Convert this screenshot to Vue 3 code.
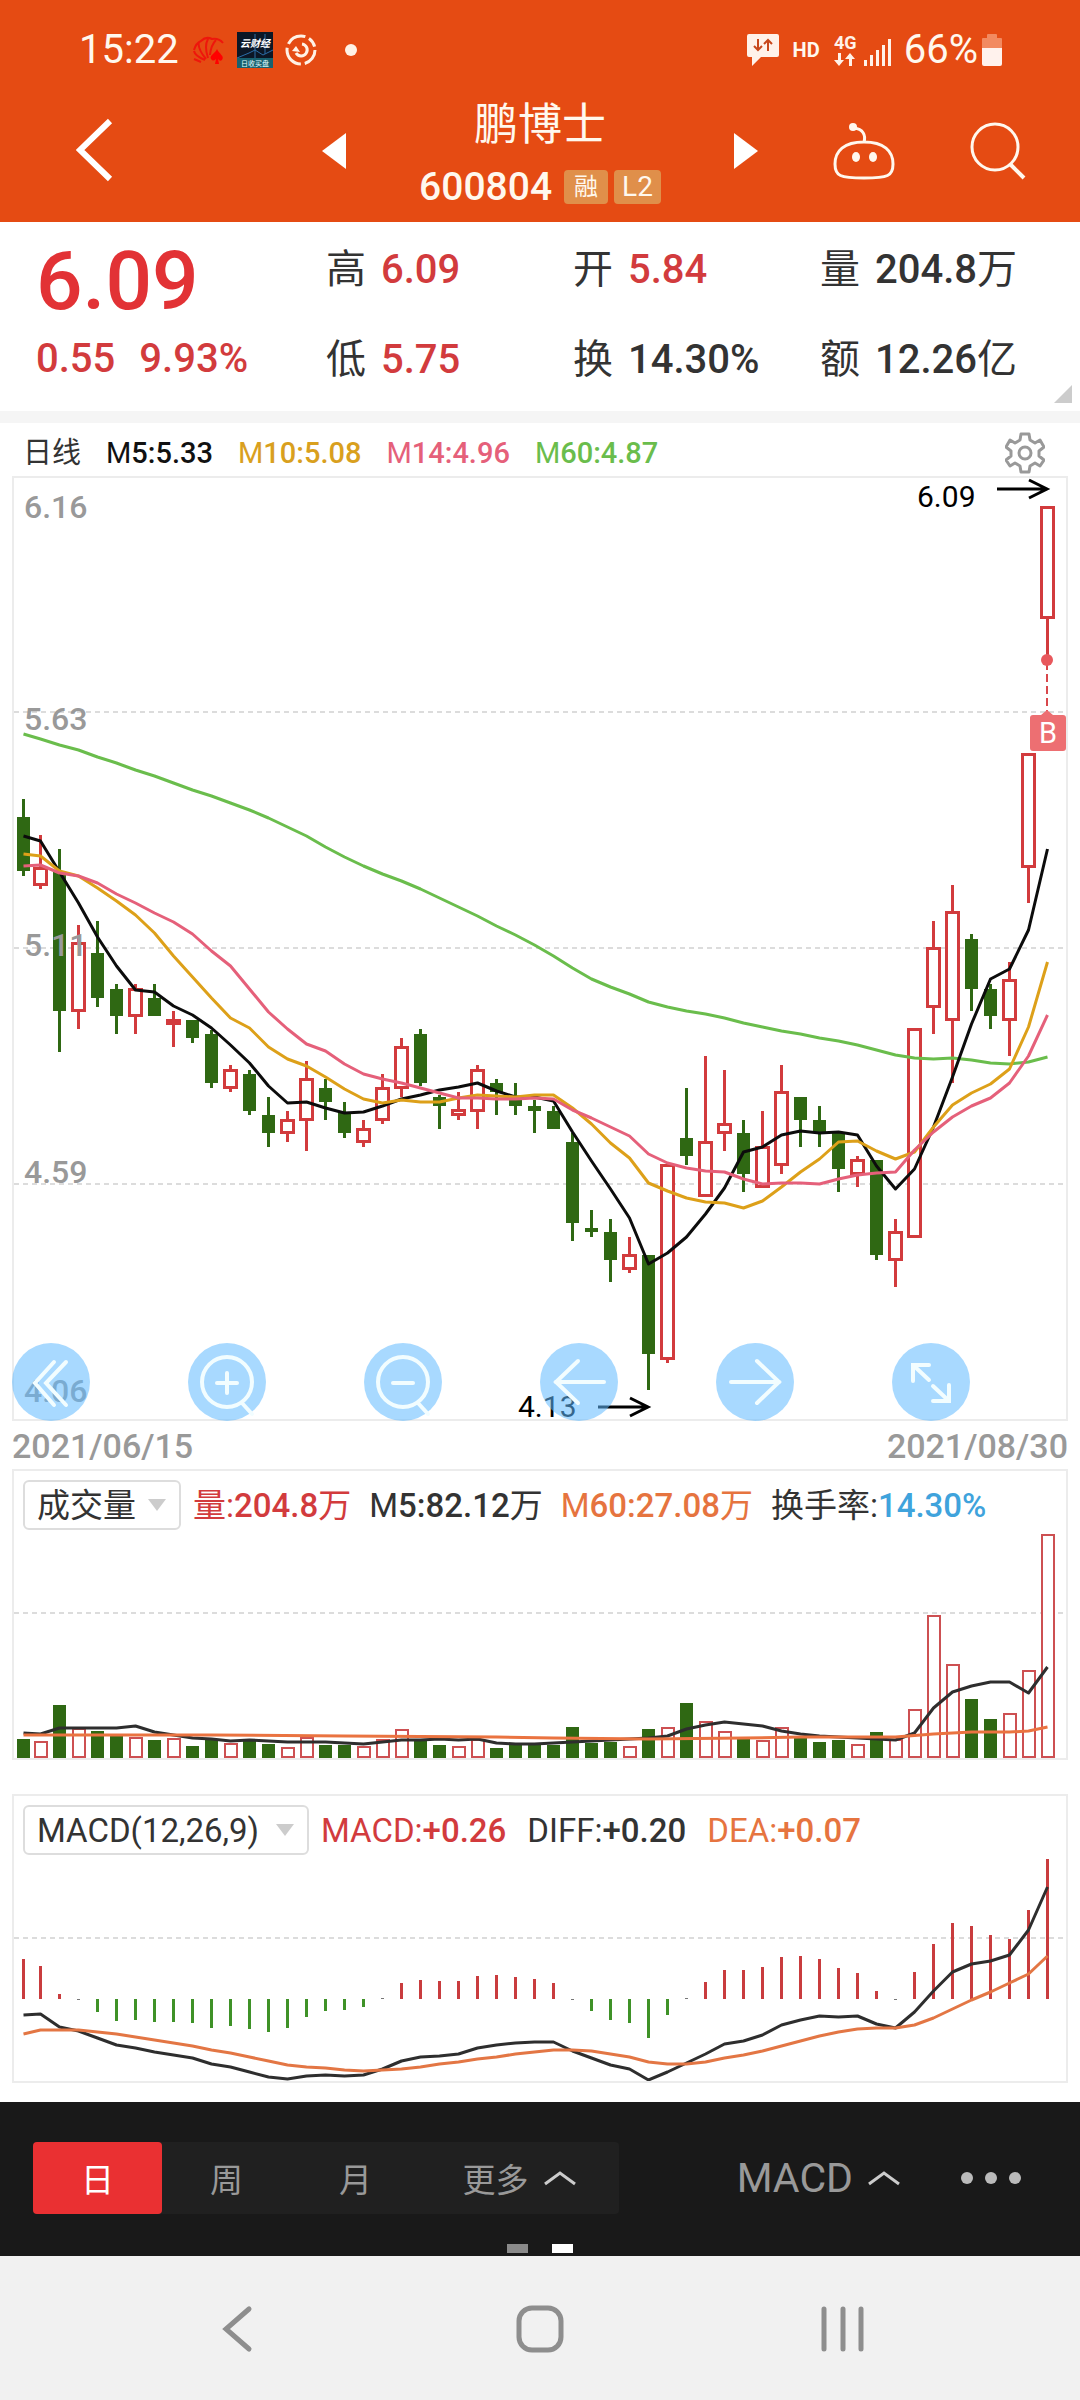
<script setup>
import { ref } from 'vue'

const range = ref('日')
const indicator = ref('volume')
const study = ref('macd')

const quotes = [
  { label: '高', value: '6.09', unit: '', up: true },
  { label: '开', value: '5.84', unit: '', up: true },
  { label: '量', value: '204.8', unit: '万', up: false },
  { label: '低', value: '5.75', unit: '', up: true },
  { label: '换', value: '14.30%', unit: '', up: false },
  { label: '额', value: '12.26', unit: '亿', up: false },
]

const averages = [
  { name: 'M', value: '5:5.33', tone: 'black' },
  { name: 'M', value: '10:5.08', tone: 'gold' },
  { name: 'M', value: '14:4.96', tone: 'pink' },
  { name: 'M', value: '60:4.87', tone: 'green' },
]

const volumeLegend = [
  { name: '量:', value: '204.8', unit: '万', tone: 'red' },
  { name: 'M', value: '5:82.12', unit: '万', tone: 'dark' },
  { name: 'M', value: '60:27.08', unit: '万', tone: 'orange' },
]

const macdLegend = [
  { name: 'MACD:', value: '+0.26', tone: 'red' },
  { name: 'DIFF:', value: '+0.20', tone: 'dark' },
  { name: 'DEA:', value: '+0.07', tone: 'orange' },
]

// Centre of each trading day on the shared time axis.
const dayX = (i) => (i < 2 ? 23.5 + i * 17 : 59.5 + (i - 2) * 19)
const linePoints = (ys) => ys.map((y, i) => `${dayX(i)},${y}`).join(' ')
const sparsePoints = (pairs) => pairs.map(([i, y]) => `${dayX(i)},${y}`).join(' ')

// [rising, high, body top, body bottom, low]
const candles = [
  [0, 799, 817, 871, 876], [1, 835, 867, 886, 889], [0, 849, 872, 1011, 1052], [1, 925, 942, 1012, 1029],
  [0, 921, 953, 998, 1007], [0, 984, 989, 1016, 1034], [1, 984, 988, 1017, 1034], [0, 984, 998, 1016, 1016],
  [1, 1011, 1019, 1025, 1047], [0, 1020, 1020, 1038, 1043], [0, 1030, 1034, 1083, 1088], [1, 1065, 1069, 1089, 1092],
  [0, 1070, 1074, 1111, 1115], [0, 1097, 1115, 1133, 1147], [1, 1111, 1119, 1134, 1142], [1, 1061, 1078, 1121, 1151],
  [0, 1079, 1088, 1102, 1120], [0, 1102, 1113, 1133, 1138], [1, 1120, 1128, 1143, 1147], [1, 1074, 1087, 1121, 1124],
  [1, 1038, 1046, 1089, 1097], [0, 1029, 1034, 1083, 1086], [0, 1095, 1097, 1106, 1129], [1, 1092, 1109, 1116, 1120],
  [1, 1065, 1069, 1112, 1129], [0, 1079, 1083, 1092, 1115], [0, 1083, 1097, 1106, 1115], [0, 1100, 1106, 1111, 1133],
  [0, 1106, 1111, 1129, 1129], [0, 1133, 1142, 1223, 1241], [0, 1210, 1228, 1232, 1237], [0, 1219, 1232, 1260, 1282],
  [1, 1237, 1254, 1270, 1273], [0, 1255, 1255, 1354, 1390], [1, 1164, 1164, 1360, 1363], [0, 1088, 1138, 1156, 1165],
  [1, 1056, 1141, 1197, 1197], [1, 1070, 1123, 1134, 1151], [0, 1120, 1133, 1174, 1192], [1, 1111, 1146, 1188, 1188],
  [1, 1065, 1091, 1166, 1174], [0, 1097, 1097, 1120, 1147], [0, 1106, 1120, 1133, 1147], [0, 1133, 1133, 1169, 1192],
  [1, 1156, 1159, 1175, 1187], [0, 1160, 1160, 1255, 1260], [1, 1219, 1231, 1261, 1287], [1, 1028, 1028, 1238, 1238],
  [1, 921, 947, 1008, 1034], [1, 885, 911, 1021, 1083], [0, 934, 939, 989, 1011], [0, 984, 989, 1016, 1029],
  [1, 962, 979, 1021, 1056], [1, 753, 753, 868, 903], [1, 506, 506, 619, 658],
].map(([up, high, top, bottom, low], i) => ({ x: dayX(i), up, high, top, bottom, low }))

const ma5 = linePoints([
  836, 841, 872, 903, 937, 966, 990, 992, 1006, 1015, 1028, 1045, 1063, 1086, 1103, 1102, 1108, 1113, 1112, 1106,
  1099, 1095, 1090, 1087, 1083, 1091, 1097, 1097, 1101, 1132, 1161, 1189, 1218, 1264, 1253, 1237, 1214, 1188, 1152,
  1147, 1135, 1131, 1133, 1132, 1135, 1166, 1189, 1169, 1127, 1077, 1024, 979, 969, 930, 849,
])
const ma10 = linePoints([
  854, 856, 871, 876, 888, 901, 915, 933, 956, 977, 998, 1018, 1028, 1047, 1059, 1066, 1077, 1089, 1099, 1103,
  1100, 1102, 1102, 1098, 1095, 1096, 1097, 1095, 1095, 1108, 1124, 1143, 1158, 1183, 1191, 1198, 1202, 1203, 1208,
  1201, 1187, 1172, 1159, 1142, 1141, 1151, 1159, 1152, 1127, 1105, 1093, 1084, 1069, 1027, 962,
])
const ma14 = linePoints([
  866, 865, 873, 876, 883, 894, 903, 913, 922, 934, 951, 966, 989, 1012, 1029, 1044, 1051, 1064, 1074, 1079,
  1083, 1088, 1093, 1098, 1098, 1099, 1099, 1098, 1099, 1110, 1118, 1127, 1136, 1154, 1163, 1168, 1171, 1172, 1179,
  1184, 1183, 1183, 1184, 1179, 1175, 1173, 1172, 1150, 1132, 1117, 1106, 1098, 1083, 1056, 1015,
])
const ma60 = linePoints([
  734, 739, 745, 750, 757, 763, 770, 776, 783, 790, 796, 803, 810, 818, 827, 836, 847, 857, 866, 874,
  881, 889, 898, 907, 916, 926, 935, 945, 956, 968, 979, 987, 994, 1002, 1007, 1011, 1014, 1018, 1023,
  1027, 1031, 1034, 1038, 1041, 1045, 1050, 1055, 1058, 1059, 1058, 1060, 1063, 1064, 1062, 1057,
])

const volumeBase = 1758
const volumes = [
  1739, 1741, 1705, 1728, 1731, 1736, 1737, 1740, 1738, 1746, 1740, 1743, 1740, 1744, 1747, 1737, 1745, 1745, 1746,
  1739, 1729, 1740, 1745, 1746, 1739, 1748, 1744, 1744, 1745, 1727, 1743, 1742, 1746, 1729, 1727, 1703, 1721, 1731,
  1739, 1740, 1727, 1738, 1742, 1740, 1744, 1732, 1739, 1709, 1615, 1664, 1699, 1719, 1713, 1670, 1534,
].map((top, i) => ({ x: dayX(i), up: candles[i].up, top }))

const volume5 = linePoints([
  1733, 1734, 1728, 1728, 1728, 1728, 1726, 1732, 1735, 1738, 1739, 1741, 1740, 1741, 1742, 1742, 1742, 1743, 1744,
  1742, 1740, 1740, 1739, 1740, 1739, 1743, 1744, 1744, 1743, 1742, 1741, 1740, 1739, 1738, 1736, 1729, 1725, 1722,
  1724, 1726, 1731, 1734, 1736, 1737, 1738, 1739, 1740, 1733, 1708, 1692, 1686, 1682, 1682, 1693, 1667,
])
const volume60 = sparsePoints([
  [0, 1735], [10, 1735], [17, 1736], [25, 1737], [28, 1738], [33, 1739], [38, 1738], [41, 1737], [46, 1737],
  [48, 1734], [50, 1732], [52, 1732], [53, 1731], [54, 1727],
])

const macdZero = 1999
const macdBars = [
  1959, 1966, 1994, 2000, 2012, 2021, 2020, 2022, 2022, 2023, 2028, 2026, 2029, 2032, 2028, 2017, 2011, 2010, 2007,
  1998, 1983, 1980, 1981, 1981, 1976, 1975, 1977, 1979, 1983, 2000, 2011, 2020, 2023, 2038, 2015, 1998, 1982, 1970,
  1970, 1967, 1957, 1956, 1959, 1968, 1973, 1991, 2000, 1972, 1944, 1923, 1926, 1935, 1939, 1910, 1859,
].map((y, i) => ({
  x: dayX(i),
  y: Math.min(y, macdZero),
  height: Math.abs(y - macdZero),
  tone: Math.abs(y - macdZero) < 2 ? '#777' : y < macdZero ? '#c93c3e' : '#3f9228',
}))
const diff = linePoints([
  2015, 2014, 2027, 2031, 2038, 2045, 2048, 2052, 2055, 2058, 2064, 2067, 2072, 2077, 2079, 2076, 2075, 2076, 2075,
  2069, 2061, 2057, 2056, 2054, 2048, 2045, 2043, 2042, 2042, 2051, 2058, 2065, 2069, 2080, 2072, 2063, 2054, 2044,
  2041, 2035, 2025, 2020, 2016, 2017, 2016, 2024, 2028, 2012, 1991, 1972, 1964, 1961, 1955, 1930, 1887,
])
const dea = linePoints([
  2034, 2030, 2030, 2030, 2032, 2034, 2037, 2040, 2043, 2046, 2050, 2053, 2057, 2061, 2065, 2067, 2068, 2070, 2071,
  2070, 2069, 2067, 2064, 2062, 2059, 2057, 2054, 2052, 2050, 2050, 2051, 2054, 2057, 2062, 2064, 2064, 2062, 2058,
  2055, 2051, 2046, 2041, 2036, 2032, 2029, 2028, 2028, 2025, 2018, 2009, 2000, 1992, 1983, 1974, 1956,
])

const priceLabels = [
  { text: '6.16', y: 518 },
  { text: '5.63', y: 730 },
  { text: '5.11', y: 956 },
  { text: '4.59', y: 1183 },
  { text: '4.06', y: 1402 },
]

const tools = [
  { label: '更早', paths: ['M42 19 23 40 42 62', 'M54 19 34 40 54 62'] },
  { label: '放大', paths: ['M39 30V50', 'M29 40H49', 'M54 60 64 71'], lens: true },
  { label: '缩小', paths: ['M29 40H49', 'M54 60 64 71'], lens: true },
  { label: '左移', paths: ['M64 39H16', 'M38 18 16 39 38 60'] },
  { label: '右移', paths: ['M15 39H63', 'M41 18 63 39 41 60'] },
  { label: '全屏', paths: ['M21 38V22H37', 'M21 22 37 37', 'M41 58H57V42', 'M57 58 41 43'] },
]
</script>

<template>
  <div class="app">
    <header class="header">
      <div class="status">
        <div class="status-side">
          <span class="clock">15:22</span>
          <svg class="shell" width="34" height="28" viewBox="0 0 34 28" fill="none" stroke="#ee160c" stroke-width="2">
            <path d="M14 24Q4 20 3 15M10 26 3 23M15 23Q6 12 8 6M17 22Q13 10 17 3M19 19Q20 9 25 4M3 14Q5 7 10 5Q15 0 21 3Q28 2 32 7" />
            <path d="M26 13C28 18 34 20 31 24Q29 26 27 23L28 28H24L25 23Q22 26 20 23C18 19 24 18 26 13Z" fill="#f00" stroke="none" />
          </svg>
          <svg width="36" height="36" viewBox="0 0 36 36">
            <rect width="36" height="36" fill="#0c1726" />
            <path d="M0 26 12 21 18 18 26 23 36 18M18 2V26M28 2V22" stroke="#2b6ea8" stroke-width="1" fill="none" />
            <rect y="26" width="36" height="10" fill="#17616f" />
            <text x="18" y="15" text-anchor="middle" font-size="10" font-weight="700" font-style="italic" fill="#fff">云财经</text>
            <text x="18" y="34" text-anchor="middle" font-size="7" fill="#e6ffff">日收买盘</text>
          </svg>
          <svg width="32" height="32" viewBox="0 0 32 32" fill="none" stroke="#fff2e6" stroke-width="3">
            <circle cx="16" cy="16" r="14" stroke-dasharray="18 4 24 4 20 4 10 4" />
            <path d="M17 10A6 6 0 1 1 11 19" />
            <path d="M7 17 11 12 15 18Z" fill="#fff2e6" stroke="none" />
          </svg>
          <i class="dot"></i>
        </div>
        <div class="status-side right">
          <svg width="32" height="34" viewBox="0 0 32 34">
            <path d="M2 1H30Q32 1 32 3V22Q32 24 30 24H14L5 33V24H2Q0 24 0 22V3Q0 1 2 1Z" fill="#fff2e9" />
            <path d="M11 6V17M7 13 11 17 15 13M21 18V7M17 11 21 7 25 11" fill="none" stroke="#c8471a" stroke-width="2" />
          </svg>
          <span class="hd">HD</span>
          <svg width="58" height="34" viewBox="0 0 58 34" fill="#fff2e9">
            <text x="0" y="16" font-size="18" font-weight="700">4G</text>
            <path d="M4 20H7V27H10L5 33 0 27H4ZM15 33H18V26H21L16 20 11 26H15Z" />
            <path d="M30 27H33V33H30ZM36 22H39V33H36ZM42 17H45V33H42ZM48 12H51V33H48ZM54 6H57V33H54Z" />
          </svg>
          <span class="battery-text">66%</span>
          <svg class="battery" width="20" height="32" viewBox="0 0 20 32">
            <path d="M5 1Q5 0 6 0H14Q15 0 15 1V4H19Q20 4 20 5V14H0V5Q0 4 1 4H5Z" fill="#f28a60" />
            <path d="M0 14H20V30Q20 32 18 32H2Q0 32 0 30Z" fill="#fff2ed" />
          </svg>
        </div>
      </div>
      <nav class="titlebar">
        <div class="side">
          <button class="plain" aria-label="返回">
            <svg width="38" height="66" viewBox="0 0 38 66"><path d="M34 3 4 32 34 61" fill="none" stroke="#fff" stroke-width="6" /></svg>
          </button>
          <button class="plain" aria-label="上一只">
            <svg width="24" height="36" viewBox="0 0 24 36"><path d="M24 0V36L0 18Z" fill="#fff" /></svg>
          </button>
        </div>
        <div class="stock">
          <h1>鹏博士</h1>
          <div class="code">
            <strong>600804</strong>
            <span class="badge">融</span>
            <span class="badge level">L2</span>
          </div>
        </div>
        <div class="side end">
          <button class="plain" aria-label="下一只">
            <svg width="24" height="36" viewBox="0 0 24 36"><path d="M0 0V36L24 18Z" fill="#fff" /></svg>
          </button>
          <button class="plain" aria-label="助手">
            <svg width="62" height="58" viewBox="0 0 62 58" fill="none" stroke="#fff8ee" stroke-width="3">
              <path d="M31 20C51 20 60 29 60 42C60 54 55 56 31 56C7 56 2 54 2 42C2 29 11 20 31 20ZM21 6C30 7 33 13 31 20" />
              <circle cx="20" cy="5" r="4" fill="#fff8ee" stroke="none" />
              <ellipse cx="23" cy="35" rx="4" ry="5" fill="#fff8ee" stroke="none" />
              <ellipse cx="40" cy="35" rx="4" ry="5" fill="#fff8ee" stroke="none" />
            </svg>
          </button>
          <button class="plain" aria-label="搜索">
            <svg width="56" height="58" viewBox="0 0 56 58" fill="none" stroke="#fff8ee" stroke-width="3">
              <circle cx="25" cy="25" r="23" /><path d="M40 42 54 56" stroke-width="4" />
            </svg>
          </button>
        </div>
      </nav>
    </header>

    <section class="quote">
      <div class="price">
        <strong class="last">6.09</strong>
        <div class="change"><span>0.55</span><span>9.93%</span></div>
      </div>
      <dl class="stats">
        <div v-for="q in quotes" :key="q.label" class="stat">
          <dt>{{ q.label }}</dt>
          <dd :class="{ up: q.up }">{{ q.value }}<span class="unit">{{ q.unit }}</span></dd>
        </div>
      </dl>
      <i class="corner"></i>
    </section>

    <main class="charts">
      <div class="ma-row">
        <span class="period">日线</span>
        <span v-for="a in averages" :key="a.value" :class="a.tone">{{ a.name }}<b>{{ a.value }}</b></span>
        <button class="plain settings" aria-label="设置">
          <svg width="40" height="42" viewBox="0 0 40 42" fill="none" stroke="#999" stroke-width="3" stroke-linejoin="round">
            <path d="M16 2H24L25 8 30 11 35 8 39 15 34 19V24L39 28 35 34 30 31 25 34 24 40H16L15 34 10 31 5 34 1 28 6 24V19L1 15 5 8 10 11 15 8Z" />
            <circle cx="20" cy="21" r="6" />
          </svg>
        </button>
      </div>

      <div class="kline">
        <div class="frame">
          <svg class="plot" viewBox="14 478 1052 941">
            <g class="grid"><path d="M14 712H1066M14 948H1066M14 1184H1066" /></g>
            <g v-for="c in candles" :key="c.x">
              <template v-if="c.up">
                <rect :x="c.x - 1.5" :y="c.high" width="3" :height="c.top - c.high" fill="#d23b3d" />
                <rect :x="c.x - 1.5" :y="c.bottom" width="3" :height="c.low - c.bottom" fill="#d23b3d" />
                <rect :x="c.x - 6" :y="c.top + 1.5" width="12" :height="c.bottom - c.top - 3" fill="#fff" stroke="#d23b3d" stroke-width="3" />
              </template>
              <template v-else>
                <rect :x="c.x - 1.5" :y="c.high" width="3" :height="c.low - c.high" fill="#2f6813" />
                <rect :x="c.x - 6.5" :y="c.top" width="13" :height="c.bottom - c.top" fill="#2f6813" />
              </template>
            </g>
            <g class="line">
              <polyline :points="ma60" stroke="#6abd4c" />
              <polyline :points="ma5" stroke="#0c0c0c" />
              <polyline :points="ma10" stroke="#dda019" />
              <polyline :points="ma14" stroke="#e5607a" />
            </g>
            <g class="axis"><text v-for="p in priceLabels" :key="p.text" x="24" :y="p.y">{{ p.text }}</text></g>
            <g font-size="30" fill="#000">
              <text x="917" y="507">6.09</text>
              <text x="518" y="1417">4.13</text>
            </g>
            <path d="M997 489H1046M1029 480 1047 489 1029 498M598 1407H647M630 1398 648 1407 630 1416" fill="none" stroke="#000" stroke-width="3" />
            <path d="M1047 662V712" stroke="#d8474b" stroke-width="2" stroke-dasharray="8 4" />
            <circle cx="1047" cy="660" r="6" fill="#e8585c" />
            <path d="M1047 710 1053 715H1063Q1066 715 1066 718V748Q1066 751 1063 751H1033Q1030 751 1030 748V718Q1030 715 1033 715H1041Z" fill="#ed6f72" />
            <text x="1048" y="743" font-size="29" fill="#fff" text-anchor="middle">B</text>
          </svg>
        </div>
        <div class="tools">
          <button v-for="t in tools" :key="t.label" class="tool" :aria-label="t.label">
            <svg width="78" height="78" viewBox="0 0 78 78" fill="none" stroke="#f2fdff" stroke-width="4" stroke-linecap="round">
              <circle v-if="t.lens" cx="39" cy="39" r="25" stroke-width="4" />
              <path v-for="d in t.paths" :key="d" :d="d" />
            </svg>
          </button>
        </div>
      </div>
      <div class="dates"><time>2021/06/15</time><time>2021/08/30</time></div>

      <section class="frame volume">
        <div class="legend">
          <label class="picker">
            <select v-model="indicator" aria-label="副图指标"><option value="volume">成交量</option></select>
          </label>
          <span v-for="l in volumeLegend" :key="l.value" :class="l.tone">{{ l.name }}<b>{{ l.value }}</b>{{ l.unit }}</span>
          <span class="dark">换手率:<b class="blue">14.30%</b></span>
        </div>
        <svg class="plot" viewBox="14 1532 1052 226">
          <g class="grid"><path d="M14 1613H1066" /></g>
          <g v-for="v in volumes" :key="v.x">
            <rect v-if="v.up" :x="v.x - 5.5" :y="v.top + 1" width="12" :height="volumeBase - v.top - 2" fill="#fff" stroke="#cd5052" stroke-width="2" />
            <rect v-else :x="v.x - 6.5" :y="v.top" width="13" :height="volumeBase - v.top" fill="#2f6813" />
          </g>
          <g class="line">
            <polyline :points="volume5" stroke="#2e2e2e" />
            <polyline :points="volume60" stroke="#ea7340" />
          </g>
        </svg>
      </section>

      <section class="frame macd">
        <div class="legend">
          <label class="picker">
            <select v-model="study" aria-label="技术指标"><option value="macd">MACD(12,26,9)</option></select>
          </label>
          <span v-for="l in macdLegend" :key="l.name" :class="l.tone">{{ l.name }}<b>{{ l.value }}</b></span>
        </div>
        <svg class="plot" viewBox="14 1856 1052 225">
          <g class="grid"><path d="M14 1938H1066" /></g>
          <rect v-for="b in macdBars" :key="b.x" :x="b.x - 1.5" :y="b.y" width="3" :height="b.height" :fill="b.tone" />
          <g class="line">
            <polyline :points="diff" stroke="#2e2e2e" />
            <polyline :points="dea" stroke="#e37644" />
          </g>
        </svg>
      </section>
    </main>

    <div class="bottom">
      <div class="bar">
        <div class="tabs">
          <button v-for="r in ['日', '周', '月']" :key="r" class="tab" :class="{ active: range === r }" @click="range = r">{{ r }}</button>
          <button class="tab more">更多
            <svg width="34" height="16" viewBox="0 0 34 16"><path d="M2 14 17 3 32 14" fill="none" stroke="#ccc" stroke-width="3" /></svg>
          </button>
        </div>
        <button class="study">MACD
          <svg width="34" height="16" viewBox="0 0 34 16"><path d="M2 14 17 3 32 14" fill="none" stroke="#ccc" stroke-width="3" /></svg>
        </button>
        <button class="dots" aria-label="更多操作"><i></i><i></i><i></i></button>
      </div>
      <div class="pager"><i></i><i class="on"></i></div>
    </div>

    <nav class="system">
      <button class="plain" aria-label="后退">
        <svg width="50" height="50" viewBox="0 0 50 50"><path d="M37 5 14 25 37 45" fill="none" stroke="#8e8e8e" stroke-width="5" stroke-linecap="round" /></svg>
      </button>
      <button class="plain" aria-label="主屏幕">
        <svg width="50" height="50" viewBox="0 0 50 50"><rect x="4" y="4" width="42" height="42" rx="13" fill="none" stroke="#8e8e8e" stroke-width="5" /></svg>
      </button>
      <button class="plain" aria-label="最近任务">
        <svg width="50" height="50" viewBox="0 0 50 50"><path d="M6 5V45M25 5V45M43 5V45" stroke="#8e8e8e" stroke-width="5" stroke-linecap="round" /></svg>
      </button>
    </nav>
  </div>
</template>

<style>
body {
  background: #fff;
}
</style>

<style scoped>
.app {
  font-family: Roboto, "Noto Sans CJK SC", sans-serif;
  color: #333;
}
.app *,
.app {
  box-sizing: border-box;
}
svg {
  display: block;
  flex: none;
}
svg text {
  font-family: Roboto, "Noto Sans CJK SC", sans-serif;
}
button,
select {
  font-family: inherit;
  border: 0;
  background: none;
  padding: 0;
  margin: 0;
}
.plain {
  display: block;
}
b {
  font-weight: 500;
}

.header {
  background: #e54b13;
  color: #fff8ee;
}
.status {
  height: 88px;
  padding: 12px 78px 0 79px;
  display: flex;
  justify-content: space-between;
  align-items: center;
}
.status-side {
  display: flex;
  align-items: center;
  gap: 12px;
}
.clock,
.battery-text {
  font-size: 40px;
  line-height: 40px;
}
.dot {
  width: 12px;
  height: 12px;
  margin-left: 16px;
  border-radius: 50%;
  background: #fff2e6;
}
.hd {
  font-size: 20px;
  line-height: 40px;
  font-weight: 700;
  margin: 0 2px;
}
.battery {
  margin-left: -8px;
}
.titlebar {
  height: 134px;
  padding-bottom: 8px;
  display: grid;
  grid-template-columns: 32% 36% 32%;
  align-items: center;
}
.side {
  padding-left: 76px;
  display: flex;
  align-items: center;
  justify-content: space-between;
}
.side.end {
  padding: 0 54px 0 0;
}
.stock {
  padding-top: 4px;
  display: flex;
  flex-direction: column;
  align-items: center;
  gap: 20px;
}
h1 {
  margin: 0;
  font-size: 44px;
  line-height: 48px;
  font-weight: 400;
}
.code {
  display: flex;
  align-items: center;
  gap: 6px;
  height: 36px;
}
.code strong {
  font-size: 39px;
  line-height: 36px;
  font-weight: 500;
  margin-right: 6px;
}
.badge {
  height: 34px;
  padding: 0 10px;
  border-radius: 4px;
  background: #e08f4a;
  font-size: 24px;
  line-height: 34px;
}
.level {
  font-size: 28px;
  padding: 0 8px;
}

.quote {
  position: relative;
  height: 201px;
  padding-left: 36px;
  border-bottom: 12px solid #f5f5f5;
  display: flex;
}
.price {
  flex: 290;
  color: #e23235;
  font-weight: 500;
}
.last {
  display: block;
  margin-top: 9px;
  font-size: 82px;
  line-height: 100px;
  font-weight: 500;
}
.change {
  display: flex;
  gap: 24px;
  margin-top: 4px;
  font-size: 40px;
  line-height: 48px;
  color: #d23b3d;
}
.stats {
  flex: 754;
  margin: 0;
  padding-top: 24px;
  display: grid;
  grid-template-columns: 247fr 247fr 260fr;
  grid-auto-rows: 48px;
  row-gap: 42px;
}
.stat {
  display: flex;
  gap: 15px;
  font-size: 40px;
  line-height: 48px;
  white-space: nowrap;
}
dd {
  margin: 0;
  font-weight: 500;
}
dd.up {
  color: #d23b3d;
}
.unit {
  font-weight: 400;
}
.corner {
  position: absolute;
  right: 8px;
  bottom: 8px;
  border: 9px solid #ccc;
  border-top-color: transparent;
  border-left-color: transparent;
}

.charts {
  padding: 0 12px;
}
.ma-row {
  height: 53px;
  padding: 6px 23px 0 11px;
  display: flex;
  align-items: center;
  gap: 25px;
  font-size: 29px;
  line-height: 48px;
  white-space: nowrap;
}
.settings {
  margin-left: auto;
}
.black {
  color: #111;
}
.dark {
  color: #333;
}
.gold {
  color: #d9a01e;
}
.pink {
  color: #e5607a;
}
.green {
  color: #6abd4c;
}
.red {
  color: #d23b3d;
}
.orange {
  color: #e6743f;
}
.blue {
  color: #3fa3dc;
}

.frame {
  border: 2px solid #ececec;
}
.plot {
  width: 100%;
  height: auto;
}
.grid {
  stroke: #dcdcdc;
  stroke-width: 2;
  stroke-dasharray: 5 4;
}
.line {
  fill: none;
  stroke-width: 3;
  stroke-linejoin: round;
}
.axis {
  fill: #999;
  font-size: 32px;
  font-weight: 500;
}
.kline {
  position: relative;
}
.tools {
  position: absolute;
  left: 0;
  right: 98px;
  bottom: 0;
  display: flex;
  justify-content: space-between;
}
.tool {
  width: 78px;
  height: 78px;
  border-radius: 50%;
  background: rgba(96, 186, 255, 0.55);
}
.dates {
  height: 48px;
  padding-top: 1px;
  display: flex;
  justify-content: space-between;
  font-size: 34px;
  line-height: 48px;
  font-weight: 500;
  color: #999;
}
.legend {
  height: 61px;
  padding: 9px 9px 0;
  display: flex;
  align-items: flex-start;
  gap: 18px;
  font-size: 33px;
  line-height: 52px;
  white-space: nowrap;
}
.macd {
  margin-top: 34px;
}
.macd .legend {
  height: 60px;
  gap: 21px;
}
.macd .picker {
  margin-right: -9px;
}
.macd select {
  width: 286px;
}
.picker {
  position: relative;
  margin-right: -6px;
}
.picker::after {
  content: "";
  position: absolute;
  right: 15px;
  top: 19px;
  border: 9px solid transparent;
  border-top: 12px solid #ccc;
  border-bottom: 0;
  pointer-events: none;
}
select {
  display: block;
  appearance: none;
  height: 50px;
  padding: 1px 43px 0 12px;
  border: 2px solid #ddd;
  border-radius: 6px;
  font-size: 33px;
  line-height: 46px;
  color: #333;
}

.bottom {
  height: 154px;
  margin-top: 19px;
  padding-top: 40px;
  background: #191919;
}
.bar {
  display: flex;
  align-items: center;
  padding: 0 59px 0 33px;
}
.tabs {
  display: flex;
  border-radius: 4px;
  background: #202020;
}
.tab {
  width: 129px;
  height: 72px;
  border-radius: 4px;
  font-size: 33px;
  color: #999;
}
.tab.active {
  background: #ea3032;
  color: #fff;
}
.tab.more {
  width: 199px;
}
.more,
.study {
  display: flex;
  align-items: center;
  justify-content: center;
  gap: 14px;
}
.study {
  margin-left: auto;
  font-size: 41px;
  color: #999;
}
.dots {
  display: flex;
  gap: 12px;
  margin-left: 60px;
}
.dots i {
  width: 12px;
  height: 12px;
  border-radius: 50%;
  background: #bbb;
}
.pager {
  display: flex;
  justify-content: center;
  gap: 24px;
  margin-top: 30px;
}
.pager i {
  width: 21px;
  height: 9px;
  background: #8a8a8a;
}
.pager i.on {
  background: #fff;
}
.system {
  height: 144px;
  padding: 2px 212px 0;
  display: flex;
  align-items: center;
  justify-content: space-between;
  background: #f1f1f1;
}
</style>
